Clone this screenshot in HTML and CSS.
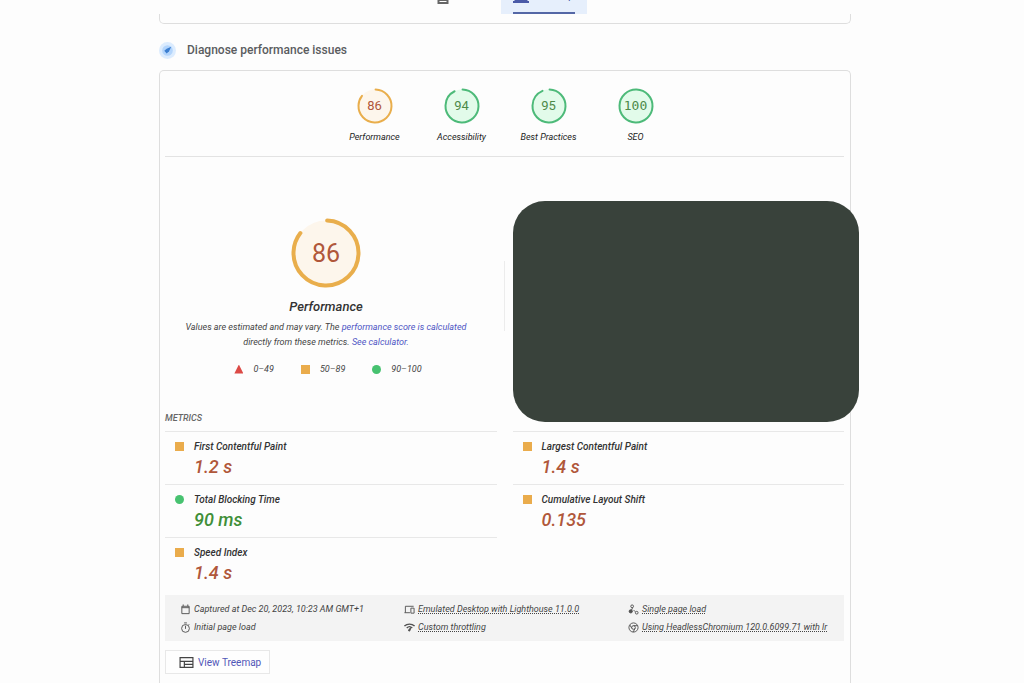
FILE: index.html
```html
<!DOCTYPE html>
<html lang="en">
<head>
<meta charset="utf-8">
<title>Diagnose performance issues</title>
<link rel="stylesheet" href="styles.css">
</head>
<body>
<nav class="tabs" aria-label="Device">
  <button class="tab" type="button" aria-label="Mobile">
    <svg class="tab-icon" viewBox="0 0 16 16"><path d="M3.500 0h9v14h-9zM3.500 11h9" fill="none" stroke="#666" stroke-width="2"/></svg>
  </button>
  <button class="tab tab-active" type="button">
    <svg class="tab-icon" viewBox="0 0 16 16"><path d="M2.500 3h11v8h-11z" fill="none" stroke="#4a5aa8" stroke-width="2"/><path d="M0 12h16v2H0z" fill="#4a5aa8"/></svg>
    <span>Desktop</span>
  </button>
</nav>
<main class="page">
  <div class="previous-card"></div>
  <header class="section-title">
    <svg class="section-icon" viewBox="0 0 16 16"><circle cx="8" cy="8" r="8" fill="#dcecfe"/><circle cx="8" cy="8" r="5" fill="#b3d5fc"/><path d="M5 8.200 7.200 6.300l4.300-1.800-2 4.300-2.300 2z" fill="#3b7ed0"/></svg>
    <h1>Diagnose performance issues</h1>
  </header>
  <section class="card">
    <div class="scores">
      <a class="score average"><span class="ring"><svg viewBox="0 0 36 36"><circle class="disc" cx="18" cy="18" r="16.500"/><circle class="arc" cx="18" cy="18" r="16.500" pathLength="100" stroke-dasharray="85 100"/></svg><b>86</b></span><span>Performance</span></a>
      <a class="score good"><span class="ring"><svg viewBox="0 0 36 36"><circle class="disc" cx="18" cy="18" r="16.500"/><circle class="arc" cx="18" cy="18" r="16.500" pathLength="100" stroke-dasharray="92 100"/></svg><b>94</b></span><span>Accessibility</span></a>
      <a class="score good"><span class="ring"><svg viewBox="0 0 36 36"><circle class="disc" cx="18" cy="18" r="16.500"/><circle class="arc" cx="18" cy="18" r="16.500" pathLength="100" stroke-dasharray="93 100"/></svg><b>95</b></span><span>Best Practices</span></a>
      <a class="score good"><span class="ring"><svg viewBox="0 0 36 36"><circle class="disc" cx="18" cy="18" r="16.500"/><circle class="arc" cx="18" cy="18" r="16.500"/></svg><b class="full">100</b></span><span>SEO</span></a>
    </div>
    <div class="overview">
      <div class="summary">
        <span class="ring ring-large average"><svg viewBox="0 0 70 70"><circle class="disc" cx="35" cy="35" r="32.500"/><circle class="arc" cx="35" cy="35" r="32.500" pathLength="100" stroke-dasharray="85 100"/></svg><b>86</b></span>
        <h2>Performance</h2>
        <p>Values are estimated and may vary. The <a href="#score">performance score is calculated</a><br>directly from these metrics. <a href="#calc">See calculator.</a></p>
        <ul class="legend">
          <li><i class="mark triangle"></i>0–49</li>
          <li><i class="mark square"></i>50–89</li>
          <li><i class="mark circle"></i>90–100</li>
        </ul>
      </div>
      <div class="separator"></div>
      <div class="cover"></div>
    </div>
    <h3>METRICS</h3>
    <div class="metrics">
      <div class="metric"><i class="mark square"></i><div><h4>First Contentful Paint</h4><p>1.2 s</p></div></div>
      <div class="metric"><i class="mark square"></i><div><h4>Largest Contentful Paint</h4><p>1.4 s</p></div></div>
      <div class="metric"><i class="mark circle"></i><div><h4>Total Blocking Time</h4><p class="fast">90 ms</p></div></div>
      <div class="metric"><i class="mark square"></i><div><h4>Cumulative Layout Shift</h4><p>0.135</p></div></div>
      <div class="metric"><i class="mark square"></i><div><h4>Speed Index</h4><p>1.4 s</p></div></div>
    </div>
    <ul class="environment">
      <li><svg viewBox="0 0 24 24"><path d="M4 5h16v16H4zM7 1v4M17 1v4M4 8h16" /></svg><span>Captured at Dec 20, 2023, 10:23 AM GMT+1</span></li>
      <li><svg viewBox="0 0 24 24"><path d="M3 19V5h18M1 19h12M15 9h7v11h-7z"/></svg><u>Emulated Desktop with Lighthouse 11.0.0</u></li>
      <li><svg viewBox="0 0 24 24"><circle cx="9" cy="5" r="3"/><circle cx="19" cy="19" r="3"/><circle class="solid" cx="6" cy="16" r="3.500"/><path d="M10 8 7 15M12 13l4 4"/></svg><u>Single page load</u></li>
      <li><svg viewBox="0 0 24 24"><circle cx="12" cy="14" r="8.500"/><path d="M9 2h6M12 8v7M18 7l2-2"/></svg><span>Initial page load</span></li>
      <li><svg viewBox="0 0 24 24"><path d="M1 9c6-6 16-6 22 0M6 13c4-4 8-4 12 0" stroke-width="3"/><path class="solid" d="m15 12-2 7c-2 2-4 0-3-2z"/></svg><u>Custom throttling</u></li>
      <li><svg viewBox="0 0 24 24"><circle cx="12" cy="12" r="10"/><circle cx="12" cy="12" r="4"/><path d="M12 8h9M8.500 14 4 6.500M15.500 14 11 22"/></svg><u>Using HeadlessChromium 120.0.6099.71 with lr</u></li>
    </ul>
    <button class="treemap" type="button"><svg viewBox="0 0 14 12"><path d="M1 1.500h12v9H1zM1 5h12M5 5v5.500M5 7.800h8" fill="none" stroke="#444" stroke-width="1.100"/></svg>View Treemap</button>
  </section>
</main>
</body>
</html>
```
FILE: styles.css
```css
* { box-sizing: border-box; }
body {
  margin: 0;
  min-height: 100vh;
  display: flex;
  flex-direction: column;
  background: #fdfdfd;
  color: #333;
  font-family: Roboto, "Liberation Sans", sans-serif;
}
h1, h2, h3, h4, p, ul { margin: 0; padding: 0; font-weight: 400; }
ul { list-style: none; }
a { color: #4e55c4; text-decoration: none; }
button { font-family: inherit; }

.tabs {
  height: 14px;
  padding-right: 40px;
  display: flex;
  justify-content: center;
  align-items: flex-end;
  gap: 12px;
  overflow: hidden;
}
.tab {
  width: 92px;
  height: 44px;
  padding: 0 12px 9px;
  display: flex;
  justify-content: flex-start;
  align-items: flex-end;
  gap: 5px;
  border: 0;
  background: none;
  font-size: 11px;
}
.tab:first-child { padding-left: 38px; }
.tab-active {
  width: 86px;
  position: relative;
  background: #e6effc;
  color: #4a5aa8;
}
.tab-active::after {
  content: "";
  position: absolute;
  left: 12px;
  right: 12px;
  bottom: 0;
  height: 2px;
  background: #5467a6;
}
.tab-icon { width: 16px; height: 16px; flex: none; }
.tab span { line-height: 18px; }

.page {
  width: 100%;
  max-width: 706px;
  margin: 0 auto;
  padding-right: 14px;
  flex: 1;
  display: flex;
  flex-direction: column;
}
.previous-card {
  height: 10px;
  border: 1px solid #dedede;
  border-top: 0;
  border-radius: 0 0 5px 5px;
}
.section-title {
  height: 46px;
  padding-top: 6px;
  display: flex;
  align-items: center;
  gap: 11px;
}
.section-icon { width: 17px; height: 17px; }
.section-title h1 {
  font-family: Roboto, sans-serif;
  font-size: 12px;
  font-weight: 500;
  line-height: 16px;
  color: #5a5c60;
}
.card {
  flex: 1;
  padding: 0 6px 8px 5px;
  border: 1px solid #dedede;
  border-bottom: 0;
  border-radius: 5px 5px 0 0;
  font-style: italic;
}

.scores {
  height: 86px;
  padding: 17px 0 0 1px;
  display: flex;
  justify-content: center;
  border-bottom: 1px solid #e3e3e3;
}
.score {
  width: 87px;
  display: flex;
  flex-direction: column;
  align-items: center;
  gap: 7px;
  font-size: 9px;
  line-height: 12px;
  color: #222;
}
.ring { width: 36px; height: 36px; display: grid; place-items: center; }
.ring > * { grid-area: 1 / 1; }
.ring svg { width: 100%; height: 100%; }
.ring b { font-size: 13px; font-weight: 400; font-style: normal; }
.ring .full { font-family: "DejaVu Sans Mono", monospace; font-size: 13px; }
.arc {
  fill: none;
  stroke-width: 2;
  stroke-linecap: round;
  transform: rotate(-88deg);
  transform-origin: center;
}
.average .disc { fill: #fdf6ec; }
.average .arc { stroke: #e9ae4c; }
.average b { color: #b0573a; }
.good .disc { fill: #e2fbea; }
.good .arc { stroke: #4dba79; }
.good b { color: #4c8a48; }

.overview {
  position: relative;
  height: 251px;
  padding-top: 61px;
  display: flex;
}
.summary {
  flex: 0 1 322px;
  display: flex;
  flex-direction: column;
  align-items: center;
}
.ring-large { width: 70px; height: 70px; }
.ring-large b { font-size: 25px; }
.ring-large .arc { stroke-width: 4; }
.summary h2 {
  margin-top: 10px;
  font-size: 13px;
  font-weight: 500;
  line-height: 18px;
}
.summary p {
  margin-top: 4px;
  font-size: 9px;
  line-height: 15px;
  text-align: center;
  color: #444;
}
.legend {
  margin-top: 12px;
  padding-left: 4px;
  display: flex;
  gap: 27px;
  font-size: 9px;
  line-height: 14px;
  color: #444;
}
.legend li { display: flex; align-items: center; gap: 10px; }
.mark { width: 9px; height: 9px; flex: none; }
.triangle { background: #dc4a46; clip-path: polygon(50% 0, 100% 100%, 0 100%); }
.square { background: #eaac4c; }
.circle { background: #47c270; border-radius: 50%; }
.separator {
  width: 1px;
  height: 70px;
  margin: 43px 0 0 17px;
  background: #ececec;
}
.cover {
  position: absolute;
  top: 44px;
  right: -15px;
  width: 51%;
  height: 221px;
  border-radius: 32px;
  background: #39423b;
}

.card h3 {
  height: 23px;
  padding-top: 4px;
  font-size: 9px;
  font-weight: 500;
  line-height: 12px;
  color: #666;
}
.metrics {
  display: grid;
  grid-template-columns: 1fr 1fr;
  column-gap: 16px;
}
.metric {
  height: 53px;
  padding: 8px 10px 0;
  display: flex;
  gap: 10px;
  border-top: 1px solid #e8e8e8;
}
.metric .mark { margin-top: 2px; }
.metric h4 { font-size: 10px; font-weight: 500; line-height: 14px; color: #333; }
.metric p { font-size: 18px; font-weight: 500; line-height: 26px; color: #b0573a; }
.metric .fast { color: #408f38; }

.environment {
  margin-top: 5px;
  padding: 5px 15px;
  display: grid;
  grid-template-columns: 224px 224px 1fr;
  background: #f3f3f3;
  font-size: 9px;
  line-height: 18px;
  color: #444;
}
.environment li { display: flex; align-items: center; gap: 3px; white-space: nowrap; }
.environment svg {
  width: 11px;
  height: 11px;
  fill: none;
  stroke: #505050;
  stroke-width: 2;
}
.environment .solid { fill: #505050; }
.environment u {
  text-decoration-style: dotted;
  text-decoration-thickness: 1px;
  text-underline-offset: 1px;
}
.treemap {
  height: 24px;
  margin-top: 9px;
  padding: 0 8px 0 13px;
  display: flex;
  align-items: center;
  gap: 4px;
  border: 1px solid #e8e8e8;
  background: #fefefe;
  color: #5157b8;
  font-size: 10px;
}
.treemap svg { width: 15px; height: 13px; }
```
